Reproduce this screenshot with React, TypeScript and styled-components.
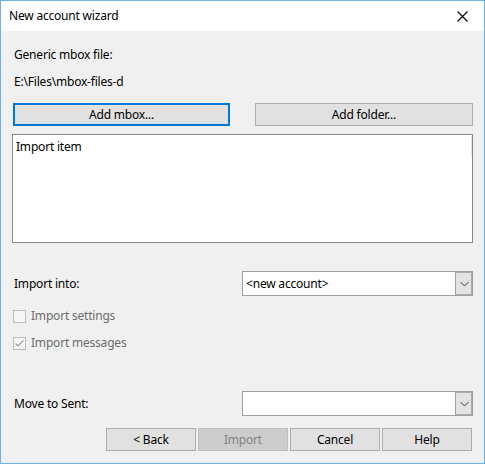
import React from "react";
import styled, { createGlobalStyle } from "styled-components";

const Global = createGlobalStyle`
  html, body { margin: 0; padding: 0; background: #f0f0f0; }
  * { box-sizing: border-box; }
`;

const Window = styled.div`
  width: 485px;
  height: 464px;
  border: 1px solid #6cb2eb;
  background: #f0f0f0;
  display: flex;
  flex-direction: column;
  font-family: "Segoe UI", "Noto Sans", "Open Sans", sans-serif;
  font-size: 12px;
  letter-spacing: -0.2px;
  color: #000;
`;

const TitleBar = styled.div`
  height: 30px;
  background: #fff;
  display: flex;
  align-items: center;
  justify-content: space-between;
  padding: 0 16px 0 8px;
  flex-shrink: 0;
`;

const TitleText = styled.span`
  font-size: 12px;
  line-height: 16px;
`;

const Body = styled.div`
  display: flex;
  flex-direction: column;
  padding: 0 11px 0 11px;
`;

const Label = styled.div<{ $mt: number }>`
  margin-top: ${(p) => p.$mt}px;
  padding-left: 2px;
  line-height: 16px;
  height: 16px;
`;

const ButtonPair = styled.div`
  margin-top: 13px;
  padding-left: 1px;
  display: grid;
  grid-template-columns: 217px 218px;
  column-gap: 25px;
`;

const Button = styled.button<{ $focused?: boolean }>`
  height: 23px;
  margin: 0;
  padding: 0;
  background: ${(p) => (p.disabled ? "#cccccc" : "#e1e1e1")};
  border: 1px solid ${(p) => (p.disabled ? "#bfbfbf" : "#adadad")};
  ${(p) => (p.$focused ? "border: 2px solid #0078d7;" : "")}
  font-family: inherit;
  font-size: 12px;
  letter-spacing: inherit;
  color: ${(p) => (p.disabled ? "#838383" : "#000")};
  line-height: 16px;
`;

const ListBox = styled.div`
  margin-top: 8px;
  height: 109px;
  background: #fff;
  border: 1px solid #828790;
  position: relative;
  padding: 4px 3px;
  line-height: 16px;
`;

const ScrollHint = styled.div`
  position: absolute;
  right: 0;
  top: 1px;
  width: 1px;
  height: 20px;
  background: #e6e6e6;
`;

const FieldRow = styled.div<{ $mt: number }>`
  margin-top: ${(p) => p.$mt}px;
  display: flex;
  align-items: center;
  justify-content: space-between;
`;

const FieldLabel = styled.span`
  padding-left: 2px;
  line-height: 16px;
`;

const Combo = styled.div`
  width: 231px;
  height: 25px;
  background: #fff;
  border: 1px solid #a0a0a0;
  display: flex;
  align-items: stretch;
`;

const ComboValue = styled.div`
  flex: 1;
  padding-left: 3px;
  display: flex;
  align-items: center;
  line-height: 16px;
`;

const ComboArrow = styled.div`
  width: 17px;
  background: #e3e3e3;
  border-left: 1px solid #a0a0a0;
  box-shadow: inset -1px -1px 0 #adadad, inset 0 1px 0 #adadad;
  display: flex;
  align-items: center;
  justify-content: center;
`;

const CheckRow = styled.div<{ $mt: number }>`
  margin-top: ${(p) => p.$mt}px;
  display: flex;
  align-items: center;
  padding-left: 1px;
  color: #6d6d6d;
  line-height: 16px;
`;

const CheckBox = styled.span`
  width: 13px;
  height: 13px;
  border: 1px solid #bcbcbc;
  background: #f6f6f6;
  margin-right: 5px;
  display: inline-flex;
  align-items: center;
  justify-content: center;
`;

const ActionBar = styled.div`
  margin-top: 12px;
  display: flex;
  justify-content: flex-end;
  gap: 2px;
  padding-right: 1px;
`;

const ActionButton = styled(Button)`
  width: 90px;
`;

const Chevron = () => (
  <svg width="9" height="6" viewBox="0 0 9 6">
    <path d="M0.5 1 L4.5 5 L8.5 1" stroke="#3c3c3c" strokeWidth="1" fill="none" />
  </svg>
);

const CloseIcon = () => (
  <svg width="11" height="11" viewBox="0 0 11 11">
    <path d="M0.5 0.5 L10.5 10.5 M10.5 0.5 L0.5 10.5" stroke="#000" strokeWidth="1.1" fill="none" />
  </svg>
);

const Check = () => (
  <svg width="11" height="11" viewBox="0 0 11 11">
    <path d="M1.5 5.5 L4 8 L9.5 2.5" stroke="#9a9a9a" strokeWidth="1.2" fill="none" />
  </svg>
);

export default function App() {
  return (
    <>
      <Global />
      <Window>
        <TitleBar>
          <TitleText>New account wizard</TitleText>
          <CloseIcon />
        </TitleBar>
        <Body>
          <Label $mt={16}>Generic mbox file:</Label>
          <Label $mt={11}>E:\Files\mbox-files-d</Label>
          <ButtonPair>
            <Button $focused>Add mbox...</Button>
            <Button>Add folder...</Button>
          </ButtonPair>
          <ListBox>
            Import item
            <ScrollHint />
          </ListBox>
          <FieldRow $mt={28}>
            <FieldLabel>Import into:</FieldLabel>
            <Combo>
              <ComboValue>&lt;new account&gt;</ComboValue>
              <ComboArrow>
                <Chevron />
              </ComboArrow>
            </Combo>
          </FieldRow>
          <CheckRow $mt={12}>
            <CheckBox />
            Import settings
          </CheckRow>
          <CheckRow $mt={11}>
            <CheckBox>
              <Check />
            </CheckBox>
            Import messages
          </CheckRow>
          <FieldRow $mt={40}>
            <FieldLabel>Move to Sent:</FieldLabel>
            <Combo>
              <ComboValue />
              <ComboArrow>
                <Chevron />
              </ComboArrow>
            </Combo>
          </FieldRow>
          <ActionBar>
            <ActionButton>&lt; Back</ActionButton>
            <ActionButton disabled>Import</ActionButton>
            <ActionButton>Cancel</ActionButton>
            <ActionButton>Help</ActionButton>
          </ActionBar>
        </Body>
      </Window>
    </>
  );
}
